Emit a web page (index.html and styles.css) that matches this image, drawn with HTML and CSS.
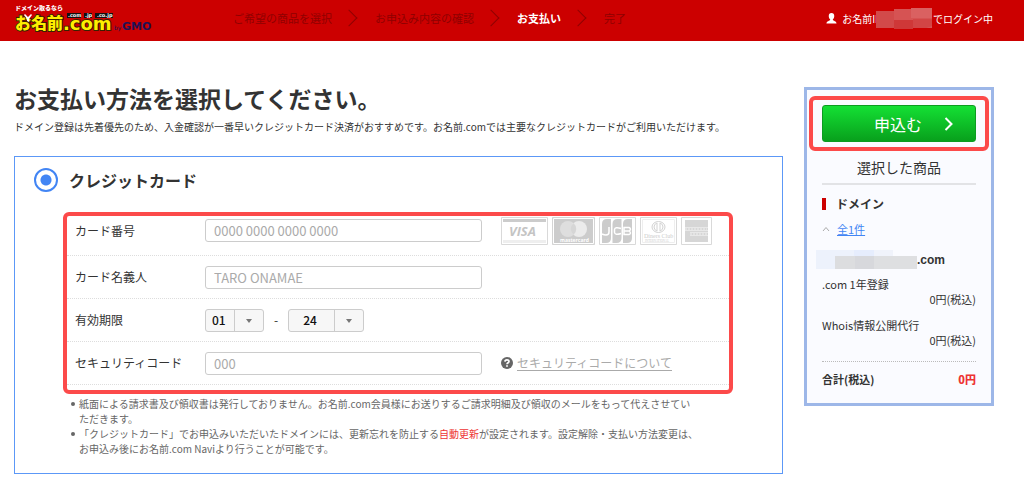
FILE: index.html
```html
<!DOCTYPE html>
<html lang="ja">
<head>
<meta charset="utf-8">
<meta name="viewport" content="width=device-width, initial-scale=1">
<title>お支払い方法 | お名前.com</title>
<link rel="stylesheet" href="styles.css">
</head>
<body>
<header class="header">
  <a class="logo" href="#" aria-label="お名前.com by GMO">
    <svg width="140" height="32" viewBox="0 0 140 32">
      <text class="logo-tag" x="0" y="8">ドメイン取るなら</text>
      <text class="logo-name" x="0" y="27">お名前</text>
      <text class="logo-com" x="48" y="28">.com</text>
      <path fill="#111" d="M52 11h14v5H52zM69 11h8v5h-8zM80 11h18v5H80z"/>
      <text class="logo-tld" x="53" y="15">.com</text>
      <text class="logo-tld" x="70" y="15">.jp</text>
      <text class="logo-tld" x="82" y="15">.co.jp</text>
      <path d="M10 12l3 3 3-3 1 1-3 4v3l-2-1v-2l-3-4z" fill="#fff"/>
      <text class="logo-by" x="99" y="28">by</text>
      <text class="logo-gmo" x="107" y="28">GMO</text>
    </svg>
  </a>
  <ol class="steps">
    <li>ご希望の商品を選択</li>
    <li>お申込み内容の確認</li>
    <li class="current" aria-current="step">お支払い</li>
    <li>完了</li>
  </ol>
  <div class="login">
    <svg class="user-icon" width="11" height="11" viewBox="0 0 12 12"><path fill="#fff" d="M6 0C4 0 3 1.300 3 3.300c0 1.500.600 2.900 1.500 3.600v.8C4.200 8.800.500 8.700.500 11.500h11c0-2.800-3.700-2.700-4-3.800v-.8C8.400 6.200 9 4.800 9 3.300 9 1.300 8 0 6 0z"/></svg>
    <span>お名前ID</span><svg class="login-mask" width="57" height="22" viewBox="0 0 57 22"><path fill="#d24a4a" d="M0 3h19v17H0z"/><path fill="#d65353" d="M18 1h38v19H18z"/><path fill="#cf3838" d="M18 12h19v9H18z"/><path fill="#d24545" d="M37 11h19v7l-6 2H37z"/><path fill="#da6161" d="M35 0h21v10H35z"/></svg><span>でログイン中</span>
  </div>
</header>

<main class="page">
  <section class="payment">
    <h1>お支払い方法を選択してください。</h1>
    <p class="lead">ドメイン登録は先着優先のため、入金確認が一番早いクレジットカード決済がおすすめです。お名前.comでは主要なクレジットカードがご利用いただけます。</p>

    <form class="method">
      <label class="method-title"><input type="radio" name="method" checked>クレジットカード</label>

      <div class="fields">
        <div class="row">
          <label for="number">カード番号</label>
          <input class="text" id="number" type="text" placeholder="0000 0000 0000 0000">
          <div class="brands">
            <svg width="47" height="28" viewBox="0 0 47 28" role="img" aria-label="VISA"><path fill="#fff" stroke="#d9d9d9" d="M.5.5h46v27H.5z"/><path fill="#ccc" d="M2 2h43v3H2z"/><path fill="#eee" d="M2 23h43v3H2z"/><text class="visa" x="8" y="19">VISA</text></svg>
            <svg width="43" height="28" viewBox="0 0 43 28" role="img" aria-label="mastercard"><path fill="#ccc" stroke="#d4d4d4" d="M.5.5h42v27H.5z"/><path fill="none" stroke="#fff" d="M1.500 1.500h40v25h-40z"/><circle cx="16" cy="12" r="8" fill="#dedede"/><circle cx="27" cy="12" r="8" fill="#ebebeb"/><path fill="#d6d6d6" d="M21.500 6a8 8 0 0 1 0 12 8 8 0 0 1 0-12z"/><text class="master" x="8" y="25">mastercard</text></svg>
            <svg width="37" height="28" viewBox="0 0 37 28" role="img" aria-label="JCB"><path fill="#fff" stroke="#d9d9d9" d="M.5.5h36v27H.5z"/><path fill="#ccc" d="M3 7q0-5 5-5h4v19q0 5-5 5H3zM13.500 7q0-5 5-5h4v19q0 5-5 5h-4zM24 7q0-5 5-5h4v19q0 5-5 5h-4z"/><path fill="none" stroke="#fff" stroke-width="1.500" d="M10 10v5q0 3-3 3-2 0-4-1M22 11.500q-6-2-6.500 1v3q.5 3 6.500 1M25 10.500v7h5q3-1.500 0-3.500 3-2 0-3.500zm0 3.500h5"/></svg>
            <svg width="37" height="28" viewBox="0 0 37 28" role="img" aria-label="Diners Club International"><path fill="#fff" stroke="#d9d9d9" d="M.5.5h36v27H.5z"/><path fill="none" stroke="#eee" d="M2.500 2.500h32v23h-32z"/><ellipse cx="18.500" cy="10" rx="6.500" ry="5.500" fill="#fff" stroke="#d2d2d2"/><path fill="none" stroke="#d2d2d2" d="M17 6q-3 1-3 4t3 4zM20 6q3 1 3 4t-3 4z"/><text class="diners" x="4" y="21">Diners Club</text><text class="diners-sub" x="5" y="25">INTERNATIONAL</text></svg>
            <svg width="31" height="28" viewBox="0 0 31 28" role="img" aria-label="American Express"><path fill="#fff" stroke="#d9d9d9" d="M.5.5h30v27H.5z"/><path fill="#d6d6d6" d="M4 3h23v22H4z"/><path fill="none" stroke="#e8e8e8" d="M4 10.500h23M4 13.500h23M9 15.500h18M9 18.500h18"/><path stroke="#efefef" stroke-dasharray="2 1" d="M4 12h22M9 17h17"/></svg>
          </div>
        </div>
        <div class="row">
          <label for="holder">カード名義人</label>
          <input class="text" id="holder" type="text" placeholder="TARO ONAMAE">
        </div>
        <div class="row">
          <label for="month">有効期限</label>
          <div class="expiry">
            <span class="select"><select id="month"><option>01</option></select></span>
            <span>-</span>
            <span class="select wide"><select aria-label="年"><option>24</option></select></span>
          </div>
        </div>
        <div class="row">
          <label for="code">セキュリティコード</label>
          <input class="text" id="code" type="text" placeholder="000">
          <div class="help">
            <svg width="12" height="12" viewBox="0 0 12 12"><circle cx="6" cy="6" r="6" fill="#666"/><path fill="none" stroke="#fff" stroke-width="1.700" d="M3.900 4.600C4 2.400 8 2.400 8 4.500 8 5.800 6 5.800 6 7.300"/><path fill="#fff" d="M5.100 8.200h1.800v1.600H5.100z"/></svg>
            <a href="#">セキュリティコードについて</a>
          </div>
        </div>
      </div>

      <ul class="notes">
        <li>紙面による請求書及び領収書は発行しておりません。お名前.com会員様にお送りするご請求明細及び領収のメールをもって代えさせてい<br>ただきます。</li>
        <li>「クレジットカード」でお申込みいただいたドメインには、更新忘れを防止する<em>自動更新</em>が設定されます。設定解除・支払い方法変更は、<br>お申込み後にお名前.com Naviより行うことが可能です。</li>
      </ul>
    </form>
  </section>

  <aside class="cart">
    <div class="apply-wrap">
      <button class="apply" type="button"><span>申込む</span><svg width="10" height="14" viewBox="0 0 10 14"><path fill="none" stroke="#fff" stroke-width="2" d="M1.500 1l6 6-6 6"/></svg></button>
    </div>
    <h2>選択した商品</h2>
    <h3>ドメイン</h3>
    <p class="count"><svg width="8" height="6" viewBox="0 0 8 6"><path fill="none" stroke="#aaa" d="M1 5l3-3.500L7 5"/></svg><a href="#">全1件</a></p>
    <p class="domain"><svg width="101" height="20" viewBox="0 0 101 20"><path fill="#edf2fc" d="M0 0h38v19H0z"/><path fill="#e6edfd" d="M38 0h20v8H38z"/><path fill="#f0f3fb" d="M58 0h19v8H58z"/><path fill="#dcdddf" d="M19 6h20v13H19z"/><path fill="#d7d8dc" d="M39 6h19v13H39z"/><path fill="#dedfe1" d="M58 6h43v13H58z"/></svg>.com</p>
    <dl>
      <dt>.com 1年登録</dt>
      <dd>0円(税込)</dd>
      <dt>Whois情報公開代行</dt>
      <dd>0円(税込)</dd>
    </dl>
    <p class="total"><span>合計(税込)</span><strong>0円</strong></p>
  </aside>
</main>
</body>
</html>
```
FILE: styles.css
```css
* { box-sizing: border-box; }

body {
  margin: 0;
  background: #fff;
  color: #333;
  font-family: "Noto Sans CJK JP", sans-serif;
  font-size: 12px;
  line-height: 16px;
}

h1, h2, h3, p, ul, ol, dl, dd { margin: 0; padding: 0; }

button, input, select { font: inherit; color: inherit; }

svg { flex: none; }

/* Header */
.header {
  display: flex;
  align-items: center;
  height: 41px;
  padding: 0 31px 0 15px;
  background: #c00;
  color: #fff;
  font-size: 11px;
}

.logo { display: flex; margin-bottom: 5px; }
.logo text { font-weight: 900; }
.logo .logo-tag { font-size: 6px; fill: #fff; }
.logo .logo-name,
.logo .logo-com {
  fill: #fe0;
  stroke: #3a2000;
  stroke-width: 2px;
  paint-order: stroke;
}
.logo .logo-name { font-size: 16px; }
.logo .logo-com { font: bold 18px "DejaVu Sans", sans-serif; }
.logo .logo-tld { font: bold 5px "DejaVu Sans", sans-serif; fill: #fff; }
.logo .logo-by { font: 6px "DejaVu Sans", sans-serif; fill: #215; }
.logo .logo-gmo { font: bold 11px "DejaVu Sans", sans-serif; fill: #215; }

.steps {
  display: flex;
  margin: 0 0 6px 78px;
  list-style: none;
  color: #8f0000;
}
.steps li { display: flex; align-items: center; }
.steps li + li::before {
  content: "";
  width: 11px;
  height: 11px;
  margin: 0 20px 0 11px;
  border: solid #8f0000;
  border-width: 1px 1px 0 0;
  transform: rotate(45deg);
}
.steps .current { color: #fff; font-weight: 700; }

.login {
  display: flex;
  align-items: center;
  margin: 0 0 4px auto;
  font-size: 10px;
}
.user-icon { margin-right: 5px; }
.login-mask { margin-left: -6px; }

/* Page columns */
.page {
  display: flex;
  align-items: flex-start;
  gap: 21px;
  padding: 46px 30px 29px 14px;
}
.payment { flex: 1; min-width: 0; }

h1 {
  font-size: 23px;
  line-height: 23px;
  font-weight: 700;
}
.lead {
  margin-top: 9px;
  font-size: 10px;
}

/* Payment method */
.method {
  margin-top: 21px;
  padding: 11px 49px 17px 48px;
  border: 1px solid #5c98f7;
}
.method-title {
  display: flex;
  align-items: center;
  gap: 11px;
  margin-left: -29px;
  font-size: 16px;
  line-height: 24px;
  font-weight: 700;
}
.method-title input {
  appearance: none;
  width: 24px;
  height: 24px;
  margin: 0;
  border: 2px solid #4285f4;
  border-radius: 50%;
  background: radial-gradient(circle, #4285f4 5px, #fff 6px);
}

.fields {
  margin-top: 20px;
  padding-bottom: 5px;
  border: 4px solid #fc4a4a;
  border-radius: 6px;
}
.row {
  display: grid;
  grid-template-columns: 138px 277px auto;
  align-items: center;
  height: 43px;
  border-bottom: 1px dotted #ddd;
}
.row:first-child { height: 40px; padding-bottom: 10px; }
.row > label { padding-left: 8px; }
.text {
  width: 100%;
  height: 23px;
  padding: 0 8px;
  border: 1px solid #ccc;
  border-radius: 3px;
  background: #fff;
  font-size: 13px;
}
.text::placeholder { color: #aaa; }

.brands { display: flex; gap: 4px; padding-left: 19px; }
.brands text { fill: #ccc; }
.brands .visa { font: italic bold 13px "Open Sans", sans-serif; fill: #c4c4c4; }
.brands .master { font: bold 5px "Open Sans", sans-serif; fill: #fff; }
.brands .diners { font: 6px "Liberation Serif", serif; }
.brands .diners-sub { font: 3px "Liberation Serif", serif; }

.expiry { display: flex; align-items: center; gap: 10px; }
.select { position: relative; display: flex; width: 59px; }
.select.wide { width: 76px; }
.select select {
  appearance: none;
  width: 100%;
  height: 23px;
  padding: 0 30px 0 6px;
  border: 1px solid #ccc;
  border-radius: 3px;
  background: #f7f7f7;
  color: #111;
  font-size: 12px;
  font-weight: 500;
}
.select.wide select { padding-left: 14px; }
.select::before {
  content: "";
  position: absolute;
  top: 0;
  right: 29px;
  height: 100%;
  border-left: 1px solid #ccc;
}
.select::after {
  content: "";
  position: absolute;
  top: 10px;
  right: 12px;
  border: solid transparent;
  border-width: 4px 3px 0;
  border-top-color: #777;
}

.help { display: flex; align-items: center; gap: 4px; padding-left: 19px; }
.help a {
  border-bottom: 1px solid #aaa;
  color: #aaa;
  line-height: 15px;
  text-decoration: none;
}

.notes {
  margin-top: 2px;
  padding-left: 16px;
  color: #666;
  font-size: 10px;
  line-height: 15px;
  white-space: nowrap;
  list-style: none;
}
.notes li::before {
  content: "";
  float: left;
  width: 4px;
  height: 4px;
  margin: 6px 0 0 -8px;
  border-radius: 50%;
  background: #666;
}
.notes em { color: #e33; font-style: normal; }

/* Cart */
.cart {
  width: 190px;
  padding: 6px 15px 16px;
  border: 3px solid #9db7e8;
  background: #fafbff;
}
.apply-wrap {
  margin: 0 -13px;
  padding: 5px 9px;
  border: 4px solid #fc4a4a;
  border-radius: 6px;
}
.apply {
  display: flex;
  align-items: center;
  justify-content: flex-end;
  gap: 22px;
  width: 100%;
  height: 37px;
  padding: 0 21px;
  border: 1px solid #0c9c20;
  border-radius: 3px;
  background: linear-gradient(#14e034, #08a01c);
  color: #fff;
  font-size: 16px;
}
.cart h2 {
  padding: 6px 0;
  border-bottom: 2px solid #e2e3e6;
  font-size: 14px;
  line-height: 20px;
  font-weight: 400;
  text-align: center;
}
.cart h3 {
  margin-top: 13px;
  padding-left: 10px;
  border-left: 4px solid #c00;
  font-size: 12px;
  line-height: 12px;
}
.count {
  display: flex;
  align-items: center;
  gap: 7px;
  margin-top: 11px;
  font-size: 11px;
}
.count a { color: #4285f4; }
.domain {
  display: flex;
  margin: 13px 0 0 -6px;
  font: bold 12px/20px "Liberation Sans", sans-serif;
}
.cart dl {
  margin-top: 7px;
  padding-bottom: 13px;
  border-bottom: 1px dotted #bbb;
  font-size: 11px;
  line-height: 15px;
}
.cart dd { text-align: right; }
.cart dd + dt { margin-top: 11px; }
.total {
  display: flex;
  justify-content: space-between;
  margin-top: 9px;
  font-size: 11px;
  font-weight: 700;
}
.total strong { color: #e33; }
```
